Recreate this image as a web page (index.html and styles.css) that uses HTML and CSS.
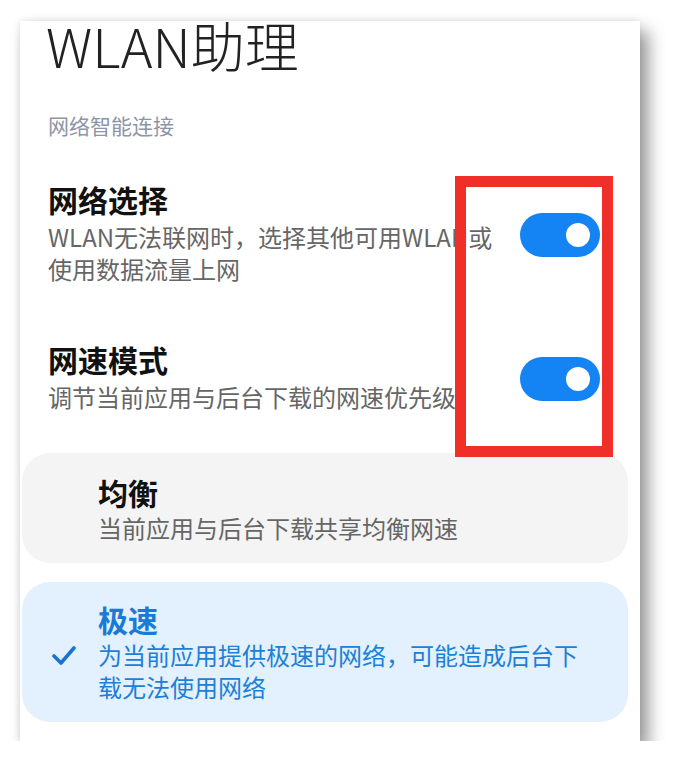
FILE: index.html
```html
<!DOCTYPE html>
<html lang="zh-CN">
<head>
  <meta charset="UTF-8">
  <meta name="viewport" content="width=device-width, initial-scale=1.0">
  <title>WLAN助理</title>
  <link rel="stylesheet" href="styles.css">
</head>
<body>
  <div class="phone">
    <h1 class="title">WLAN助理</h1>
    <div class="label">网络智能连接</div>

    <div class="row">
      <div class="text">
        <div class="name">网络选择</div>
        <div class="desc">WLAN无法联网时，选择其他可用WLAN或<br>使用数据流量上网</div>
      </div>
      <div class="switch on"><span class="knob"></span></div>
    </div>

    <div class="row second">
      <div class="text">
        <div class="name">网速模式</div>
        <div class="desc">调节当前应用与后台下载的网速优先级</div>
      </div>
      <div class="switch on"><span class="knob"></span></div>
    </div>

    <div class="option">
      <svg class="check" viewBox="0 0 24 22" width="24" height="22"><polyline points="2,11 9,18 22,3" fill="none" stroke="currentColor" stroke-width="3.6" stroke-linecap="round" stroke-linejoin="round"/></svg>
      <div class="text">
        <div class="name">均衡</div>
        <div class="desc">当前应用与后台下载共享均衡网速</div>
      </div>
    </div>

    <div class="option active">
      <svg class="check" viewBox="0 0 24 22" width="24" height="22"><polyline points="2,11 9,18 22,3" fill="none" stroke="currentColor" stroke-width="3.6" stroke-linecap="round" stroke-linejoin="round"/></svg>
      <div class="text">
        <div class="name">极速</div>
        <div class="desc">为当前应用提供极速的网络，可能造成后台下<br>载无法使用网络</div>
      </div>
    </div>

    <!-- 标注框 -->
    <div class="mark"></div>
  </div>
</body>
</html>
```

FILE: styles.css
```css
* {
  margin: 0;
  padding: 0;
  box-sizing: border-box;
}
body {
  background-color: #fff;
  padding: 20px 0 0 20px;
  font-family: "Noto Sans CJK SC", "Noto Sans", sans-serif;
}
.phone {
  position: relative;
  width: 620px;
  height: 720px;
  background-color: #fff;
  padding: 0 12px 0 2px;
  box-shadow: 8px 10px 16px rgba(0, 0, 0, 0.42), -1px -1px 6px rgba(0, 0, 0, 0.08);
}
.title {
  margin: 1px 0 0 24px;
  font-size: 54px;
  line-height: 48px;
  font-weight: 300;
  color: #222;
}
.label {
  margin: 42px 0 0 26px;
  font-size: 21px;
  line-height: 28px;
  color: #8e95a7;
}

/* 开关行 */
.row {
  display: flex;
  align-items: center;
  justify-content: space-between;
  margin: 42px 28px 0 26px;
}
.row.second {
  margin-top: 56px;
}
.name {
  font-size: 30px;
  line-height: 36px;
  font-weight: 700;
  color: #111;
}
.desc {
  margin-top: 4px;
  font-size: 24px;
  line-height: 32px;
  color: #666;
}
.switch {
  width: 80px;
  height: 44px;
  margin-top: 3px;
  border-radius: 22px;
  background-color: #ccc;
  display: flex;
  align-items: center;
  justify-content: flex-end;
  padding-right: 10px;
  flex-shrink: 0;
}
.switch.on {
  background-color: #1483f4;
}
.knob {
  width: 24px;
  height: 24px;
  border-radius: 50%;
  background-color: #fff;
}

/* 模式选项 */
.option {
  display: flex;
  align-items: center;
  gap: 22px;
  margin-top: 40px;
  padding: 21px 20px 19px 30px;
  border-radius: 28px;
  background-color: #f4f4f4;
}
.option + .option {
  margin-top: 19px;
  padding: 19px 20px 19px 30px;
}
.option .desc {
  margin-top: 2px;
}
.option .check {
  visibility: hidden;
  color: #1874d2;
  flex-shrink: 0;
  margin-top: 8px;
}
.option.active {
  background-color: #e3f0fd;
}
.option.active .check {
  visibility: visible;
}
.option.active .name {
  color: #1a7bd6;
}
.option.active .desc {
  color: #1d80d8;
}

.mark {
  position: absolute;
  left: 435px;
  top: 155px;
  width: 158px;
  height: 281px;
  border: 11px solid #ef2f28;
}
```
